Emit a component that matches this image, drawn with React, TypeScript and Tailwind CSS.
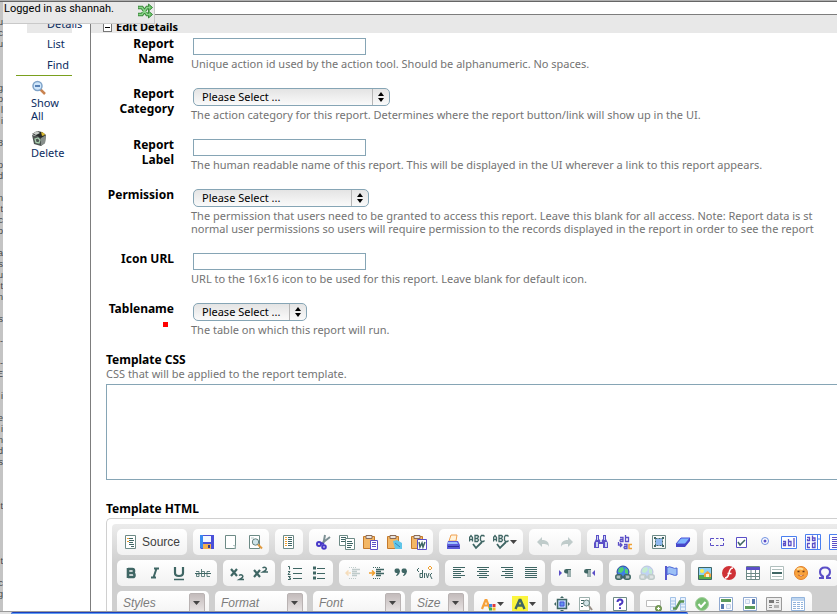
import type { ReactNode } from 'react';

const T = '#3f6664';
const B = '#5b4fc7';

/* ---------- icons ---------- */

function Svg({ children, faded = false }: { children: ReactNode; faded?: boolean }) {
  return (
    <svg
      viewBox="0 0 16 16"
      width="16"
      height="16"
      fill="none"
      aria-hidden="true"
      className={faded ? 'shrink-0 opacity-30' : 'shrink-0'}
    >
      {children}
    </svg>
  );
}

const Page = ({ children }: { children?: ReactNode }) => (
  <>
    <path d="M2.5 1.5h10v13h-10z" fill="#fff" stroke="#6d8a86" />
    {children}
  </>
);

const SourceIcon = () => (
  <Svg>
    <Page />
    <path d="M4 4.500h2M4 7.500h2" stroke="#f0a030" />
    <path d="M6 4.500h4M6 6.500h5M6 8.500h4M6 10.500h5M8 12.500h3" stroke={T} />
  </Svg>
);
const SaveIcon = () => (
  <Svg>
    <path d="M1 1h14v14H2l-1-1z" fill="#4a50d8" />
    <path d="M1 1h3v13H2l-1-1z" fill="#3a8af0" />
    <path d="M4 2h8v6H4z" fill="#f4f8ff" />
    <path d="M4 10h8v5H4z" fill="#f0b050" />
    <path d="M9 11h2v3H9z" fill="#3b3b88" />
  </Svg>
);
const NewIcon = () => (
  <Svg>
    <Page />
    <path d="M10 11.500h2v3" stroke="#b5c8c5" />
  </Svg>
);
const PreviewIcon = () => (
  <Svg>
    <Page />
    <circle cx="8.500" cy="8" r="3.200" fill="#cfe4ea" stroke="#64807d" />
    <path d="M11 10.500l4 4" stroke="#e09a40" strokeWidth="2" />
    <path d="M4 4h3" stroke="#b5c8c5" />
  </Svg>
);
const TemplatesIcon = () => (
  <Svg>
    <Page />
    <path d="M5 3v10" stroke="#f0a030" strokeWidth="2" strokeDasharray="1 1" />
    <path d="M7 3.500h4M7 5.500h4M7 7.500h4M7 9.500h4M7 11.500h4" stroke={T} />
  </Svg>
);
const CutIcon = () => (
  <Svg>
    <path d="M10 1L8.500 9M15 3L6 10" stroke="#7d9094" strokeWidth="2" />
    <circle cx="4" cy="10" r="2" stroke="#4738c8" strokeWidth="2" />
    <circle cx="9" cy="13" r="1.800" stroke="#4738c8" strokeWidth="2" />
    <path d="M5 9l4 1" stroke="#4738c8" strokeWidth="2" />
  </Svg>
);
const CopyIcon = () => (
  <Svg>
    <path d="M.5 1.500h8v10h-8z" fill="#fff" stroke="#6d8a86" />
    <path d="M2 3.500h5M2 5.500h5M2 7.500h4" stroke={T} />
    <path d="M6.500 4.500h9v11h-9z" fill="#fff" stroke="#6d8a86" />
    <path d="M8 7.500h5M8 9.500h6M8 11.500h5M8 13.500h4" stroke={T} />
  </Svg>
);
const Clip = () => (
  <>
    <path d="M.5 2.500h11v12H.5z" fill="#f3b765" stroke="#c47a2c" />
    <path d="M3 1.500h6v3H3z" fill="#e9e4e0" stroke="#8a6a55" />
  </>
);
const PasteIcon = () => (
  <Svg>
    <Clip />
    <path d="M7.500 6.500h7v9h-7z" fill="#fff" stroke={B} />
    <path d="M9 8.500h4M9 10.500h4M9 12.500h4" stroke={B} />
  </Svg>
);
const PasteTextIcon = () => (
  <Svg>
    <Clip />
    <path d="M6 7l4-1 5 3v6H8z" fill="#5fc5e8" />
    <path d="M8 9l5 4" stroke="#2f88c0" />
  </Svg>
);
const PasteWordIcon = () => (
  <Svg>
    <Clip />
    <path d="M6.500 5.500h9v10h-9z" fill="#fff" stroke={B} />
    <path d="M8 8l1 5 2-4 1 4 2-5" stroke={T} strokeWidth="1.500" />
  </Svg>
);
const PrintIcon = () => (
  <Svg>
    <path d="M6 1h6l-1 6H4z" fill="#fff3dc" stroke="#f0a050" />
    <path d="M3 7h10l2 4v4H2v-4z" fill="#5a5ad8" />
    <path d="M3 8h9l1 2H3z" fill="#9fc0ff" />
    <path d="M3 12.500h11" stroke="#2c2f9a" />
  </Svg>
);
const SpellIcon = () => (
  <Svg>
    <path
      d="M.5 7.500v-4l1.500-2 1.500 2v4M.5 5.500h3M6 7.500v-6h2.500l1 1-1 2 1 1.500-1 1.500zM6 4.500h3M15.500 2.500l-1-1h-2l-1 1.500v3l1 1.500h2l1-1"
      stroke={T}
      strokeWidth="1.300"
    />
    <path d="M4 10l3 4 6-6" stroke={T} strokeWidth="1.800" />
  </Svg>
);
const UndoIcon = () => (
  <Svg faded>
    <path d="M2 8l5-5v3c5 0 7 2 7 7-1-3-3-3-7-3v3z" fill={T} />
  </Svg>
);
const RedoIcon = () => (
  <Svg faded>
    <path d="M14 8L9 3v3c-5 0-7 2-7 7 1-3 3-3 7-3v3z" fill={T} />
  </Svg>
);
const FindIcon = () => (
  <Svg>
    <path d="M3 1h3v4l1 1h2l1-1V1h3v4l2 4v5h-5v-4H6v4H1V9l2-4z" fill={B} />
    <path d="M3 8h2v5H3zM12 8h2v5h-2zM7 6h2v2H7zM4 2h1v4H4zM11 2h1v4h-1z" fill="#c9d4f2" />
  </Svg>
);
const ReplaceIcon = () => (
  <Svg>
    <path d="M3 3.500h3v4H3.500L3 6.500 3.500 5.500H6M8.500 1v6.500h3v-4h-3" stroke={B} strokeWidth="1.300" />
    <path d="M1.500 8v3h3M3 9l2 2-2 2M7 10.500h3v4H7.500L7 13.500l.5-1H10" stroke={B} strokeWidth="1.300" />
    <path d="M15 10.500h-3v4h3" stroke="#f0a030" strokeWidth="1.500" />
  </Svg>
);
const SelectAllIcon = () => (
  <Svg>
    <path d="M1.500 1.500h13v13h-13z" stroke="#6d8a86" />
    <path d="M4.500 4.500h7v7h-7z" fill="#8fb8f0" stroke={T} strokeDasharray="2 1" />
    <path d="M3 4h2M11 4h2M3 12h2M11 12h2" stroke={T} strokeWidth="2" />
  </Svg>
);
const EraserIcon = () => (
  <Svg>
    <path d="M6 4h9l-5 6H1z" fill="#7fb6ff" stroke="#4a50d8" />
    <path d="M1 10h9v3H1zM10 10l5-6v3l-5 6z" fill="#4646c8" />
  </Svg>
);
const FormIcon = () => (
  <Svg>
    <path d="M1.500 7V4.500H5M1.500 9v2.500H5M7 4.500h2.500M7 11.500h2.500M11 4.500h3.500V7M11 11.500h3.500V9" stroke={B} />
  </Svg>
);
const CheckIcon = () => (
  <Svg>
    <path d="M3.500 3.500h10v10h-10z" fill="#fff" stroke={B} />
    <path d="M5 8l2 3 5-5" stroke={T} strokeWidth="1.500" />
  </Svg>
);
const RadioIcon = () => (
  <Svg>
    <circle cx="8" cy="7" r="3.500" fill="#fff" stroke="#6f8fe0" />
    <circle cx="8" cy="7" r="1.500" fill={B} />
  </Svg>
);
const TextFieldIcon = () => (
  <Svg>
    <path d="M.5 2.500h15v12H.5z" fill="#fff" stroke="#4a7ff0" />
    <path d="M2 7.500h2.500v4H2.500v-2h2M7.500 5v6.500h2.500v-4H7.500M13 4v9" stroke={B} strokeWidth="1.300" />
  </Svg>
);
const TextAreaIcon = () => (
  <Svg>
    <path d="M.5.5h15v15H.5z" fill="#fff" stroke="#4a7ff0" />
    <path d="M12.500 1v14M12.500 5h3" stroke="#4a7ff0" />
    <path d="M2 3.500h2.500v3H2.500V5M7.500 1.500v5H10V4H7.500M5 9.500H2.500v4H5M10 8v5.500H7.500v-4H10" stroke={B} strokeWidth="1.300" />
  </Svg>
);
const ListBoxIcon = () => (
  <Svg>
    <path d="M.5.5h15v15H.5z" fill="#fff" stroke="#4a7ff0" />
    <path d="M3 3.500h8M3 5.500h8M3 7.500h8M3 9.500h8M3 11.500h8M3 13.500h8" stroke={B} />
  </Svg>
);
const BoldIcon = () => (
  <Svg>
    <path d="M5 3v10M5 4h4.500q1.500 0 1.500 2t-1.500 2H5M9.500 8q2 0 2 2.200T9.500 12H5" stroke={T} strokeWidth="2.600" />
  </Svg>
);
const ItalicIcon = () => (
  <Svg>
    <path d="M7 3.500h5M4 12.500h5M9.500 3.500l-3 9" stroke={T} strokeWidth="2" />
  </Svg>
);
const UnderlineIcon = () => (
  <Svg>
    <path d="M4 2v6q0 3 4 3t4-3V2" stroke={T} strokeWidth="2.200" />
    <path d="M3 14.500h10" stroke={T} strokeWidth="1.500" />
  </Svg>
);
const StrikeIcon = () => (
  <Svg>
    <path
      d="M1 6.500h3v5H1.500V9H4M6.500 4v7.500h3v-5h-3M15 6.500h-3v5h3"
      stroke={T}
      strokeOpacity=".8"
    />
    <path d="M0 8.500h16" stroke={T} />
  </Svg>
);
const SubIcon = () => (
  <Svg>
    <path d="M2 4l6 7M8 4l-6 7" stroke={T} strokeWidth="2.200" />
    <path d="M10 10.500q2-1.500 3.500 0T10.500 14.500H15" stroke={T} strokeWidth="1.500" />
  </Svg>
);
const SupIcon = () => (
  <Svg>
    <path d="M1 5l6 7M7 5l-6 7" stroke={T} strokeWidth="2.200" />
    <path d="M9.500 3q2-1.500 3.500 0T10 7H15" stroke={T} strokeWidth="1.500" />
  </Svg>
);
const NumListIcon = () => (
  <Svg>
    <path d="M1 1.500h1.500v3M1 6.500h2L1 9.500h2.500M1 11.500h2.500L2 13h1.500v1.500H1" stroke={T} />
    <path d="M6 3.500h9M6 8.500h9M6 13.500h9" stroke={T} />
  </Svg>
);
const BulletListIcon = () => (
  <Svg>
    <path d="M2 3h3M2 8h3M2 13h3" stroke={T} strokeWidth="3" />
    <path d="M6 3.500h8M6 8.500h8M6 13.500h8" stroke={T} />
  </Svg>
);
const IndentBase = ({ left }: { left: boolean }) => (
  <>
    <path d="M7 4.500h8M7 6.500h5M7 8.500h8M7 10.500h5" stroke={T} strokeWidth="1.300" />
    <path d="M4 2.500h8M4 13.500h8" stroke={T} strokeDasharray="1 1" />
    <path
      d={left ? 'M6 8H1M3.500 5.500L1 8l2.500 2.500' : 'M0 8h5M3 5.500L5.500 8 3 10.500'}
      stroke="#f0a030"
      strokeWidth="1.500"
    />
  </>
);
const OutdentIcon = () => (
  <Svg faded>
    <IndentBase left />
  </Svg>
);
const IndentIcon = () => (
  <Svg>
    <IndentBase left={false} />
  </Svg>
);
const QuoteIcon = () => (
  <Svg>
    <path d="M3 3.500h2.500q1.500 1 1.500 3T4 11H3l1.500-3H3q-1.500-.5-1.500-2.200T3 3.500zM10 3.500h2.500q1.500 1 1.500 3T11 11h-1l1.500-3H10q-1.500-.5-1.500-2.200T10 3.500z" fill={T} />
  </Svg>
);
const DivIcon = () => (
  <Svg>
    <path d="M2 3L0 5l2 2M3 8.500v4h2.500V5M5 8.500H3M7.500 8v5M9 8l1.500 5L12 8M15 8l-2 2 2 4" stroke={T} />
    <path d="M13 1l2 2-2 2-2-2z" stroke="#f0a030" />
  </Svg>
);
function AlignIcon({ mode }: { mode: 'left' | 'center' | 'right' | 'justify' }) {
  const d = {
    left: 'M2 2.500h12M2 4.500h8M2 6.500h11M2 8.500h8M2 10.500h12M2 12.500h8',
    center: 'M2 2.500h12M4 4.500h8M2 6.500h12M4 8.500h8M2 10.500h12M4 12.500h8',
    right: 'M2 2.500h12M6 4.500h8M3 6.500h11M6 8.500h8M2 10.500h12M6 12.500h8',
    justify: 'M2 2.500h12M2 4.500h12M2 6.500h12M2 8.500h12M2 10.500h12M2 12.500h12',
  }[mode];
  return (
    <Svg>
      <path d={d} stroke={T} />
    </Svg>
  );
}
const Pilcrow = ({ x }: { x: number }) => (
  <path
    d={`M${x + 7} 4H${x + 2.5}q-2.500 0-2.500 2.200t2.500 2.300h1V12h1V5h1v7h1V5h.5z`}
    fill={T}
  />
);
const LtrIcon = () => (
  <Svg>
    <path d="M2 5l3 3-3 3z" fill={B} />
    <Pilcrow x={7} />
  </Svg>
);
const RtlIcon = () => (
  <Svg>
    <path d="M14 5l-3 3 3 3z" fill={B} />
    <Pilcrow x={3} />
  </Svg>
);
const LinkIcon = ({ faded = false }: { faded?: boolean }) => (
  <Svg faded={faded}>
    <circle cx="8" cy="7" r="6" fill="#3f7fe8" stroke="#2c4a9a" />
    <path d="M4 3l4-1 1 3-3 3-3-1zM10 3l3 2v4l-3-1z" fill="#4fd070" />
    <rect x=".8" y="9.800" width="6" height="4.500" rx="2" fill="#aebebc" stroke={T} strokeWidth="1.500" />
    <rect x="9.200" y="9.800" width="6" height="4.500" rx="2" fill="#aebebc" stroke={T} strokeWidth="1.500" />
    <path d="M5 12h6" stroke={T} strokeWidth="1.500" />
  </Svg>
);
const FlagIcon = () => (
  <Svg>
    <path d="M3 1v14" stroke="#4646c8" strokeWidth="1.800" />
    <path d="M4 2.500q2.500-1.500 5 0t5 .5v7q-2.500 1-5-.5t-5 0z" fill="#9cc0f6" stroke="#4a66d8" />
  </Svg>
);
const ImageIcon = () => (
  <Svg>
    <path d="M1.500 2.500h13v12h-13z" fill="#8fd0f6" stroke={T} />
    <path d="M2 10h12v4H2z" fill="#58ad4a" />
    <circle cx="5" cy="6" r="2" fill="#fdf04a" />
    <path d="M7 9l3.500-3L14 9v3H7z" fill="#f6a13a" />
    <path d="M9 9h3v3H9z" fill="#fff1c8" />
  </Svg>
);
const FlashIcon = () => (
  <Svg>
    <circle cx="8" cy="8" r="7" fill="#cf3236" />
    <path d="M12 3q-3 0-4 5t-4 5M6.500 8.500h4" stroke="#fff" strokeWidth="1.500" />
  </Svg>
);
const TableIcon = () => (
  <Svg>
    <path d="M1.500 1.500h13v13h-13zM1.500 8.500h13M1.500 11.500h13M6 5v9M10.500 5v9" fill="#fff" stroke="#6d8a86" />
    <path d="M1 2h14v3H1z" fill={B} />
  </Svg>
);
const HrIcon = () => (
  <Svg>
    <path d="M1.500 1.500h13v13h-13z" fill="#fff" stroke="#b0bfbd" />
    <path d="M3 4.500h10M3 11.500h10" stroke="#b0bfbd" />
    <path d="M3 8h10" stroke={T} strokeWidth="2" />
  </Svg>
);
const SmileyIcon = () => (
  <Svg>
    <circle cx="8" cy="8" r="6.500" fill="#f9a23c" stroke="#e0812c" />
    <path d="M4 4.500q3-2 6 0" stroke="#ffdf9a" strokeWidth="2" />
    <path d="M4.500 6.500h2M9.500 6.500h2" stroke="#6b3a18" strokeWidth="1.500" />
    <path d="M5 10q3 2.500 6 0" fill="#fff" stroke="#c0602c" />
  </Svg>
);
const OmegaIcon = () => (
  <Svg>
    <path d="M2 13h4v-1.500Q3 10 3 7q0-4.500 5-4.500T13 7q0 3-3 4.500V13h4" stroke={B} strokeWidth="2" />
  </Svg>
);
const TextColorIcon = () => (
  <Svg>
    <path d="M2 13L5.500 4h1L10 13M3.500 9.500h5" stroke="#f6a13a" strokeWidth="2.200" />
    <path d="M9 8h3v3H9z" fill="#3b86e8" />
    <path d="M12.500 8h3v3h-3z" fill="#e03a3a" />
    <path d="M9 11.500h3v3H9z" fill="#40b050" />
    <path d="M12.500 11.500h3v3h-3z" fill="#f0c030" />
  </Svg>
);
const HiliteIcon = () => (
  <Svg>
    <path d="M0 0h16v16H0z" fill="#fbf53e" />
    <path d="M3.500 13L7.500 4h1l4 9M5 9.500h6" stroke={T} strokeWidth="2.400" />
  </Svg>
);
const MaximizeIcon = () => (
  <Svg>
    <path d="M3.500 3.500h9v9h-9z" fill="#b8d4fb" stroke={T} strokeWidth="1.500" />
    <path d="M6 6h4v4H6z" fill="#5f95ee" stroke="#4a50d8" />
    <path d="M8 0l2 2H6zM8 16l2-2H6zM0 8l2-2v4zM16 8l-2-2v4z" fill={T} />
  </Svg>
);
const BlocksIcon = () => (
  <Svg>
    <path d="M1.500 1.500h10v13h-10z" fill="#fff" stroke="#9db0ad" />
    <path d="M3 4.500h3M3 7.500h2M3 10.500h2" stroke={T} />
    <circle cx="8.500" cy="7" r="3" fill="#d5e6ea" stroke="#64807d" />
    <path d="M11 10l3 4" stroke="#9a9088" strokeWidth="2" />
  </Svg>
);
const AboutIcon = () => (
  <Svg>
    <path d="M1.500 1.500h13v13h-13z" fill="#fff" stroke="#6d8a86" />
    <path d="M5.500 6q0-2.500 2.500-2.500T10.500 6Q10.500 7.500 8 8.500v1.200M8 11.200v1.800" stroke="#4a38c0" strokeWidth="2" />
  </Svg>
);
const FieldAddIcon = () => (
  <Svg>
    <path d="M.5 4.500h14v6H.5z" fill="#fff" stroke="#bcbcbc" />
    <circle cx="12.500" cy="12.500" r="3" fill="#84a862" stroke="#5e8440" />
    <path d="M11 12.500h3M12.500 11v3" stroke="#fff" />
  </Svg>
);
const MergeIcon = () => (
  <Svg>
    <path d="M.5 1.500h5v13h-5zM10.500 1.500h5v13h-5zM.5 5h5M.5 8h5M.5 11h5M10.500 5h5M10.500 8h5M10.500 11h5" fill="#e9f2fd" stroke="#a3c2e6" />
    <path d="M3 12.500h3l4-7h4" stroke="#5b9455" strokeWidth="2.500" />
  </Svg>
);
const AcceptIcon = () => (
  <Svg>
    <circle cx="8" cy="8" r="6.500" fill="#78bd72" stroke="#a3cf9e" />
    <path d="M4.500 8l2.500 3 4.500-5" stroke="#fff" strokeWidth="2" />
  </Svg>
);
const HeaderLayoutIcon = () => (
  <Svg>
    <path d="M1.500 1.500h13v13h-13z" fill="#fff" stroke="#8fa9d0" />
    <path d="M3 3h10v3H3z" fill="#5c9c5c" />
    <path d="M3 8h3v5H3z" fill="#5577ad" />
    <path d="M8.500 8.500h4v4h-4z" fill="#eef3fa" stroke="#c5d3e8" />
  </Svg>
);
const FooterLayoutIcon = () => (
  <Svg>
    <path d="M1.500 1.500h13v13h-13z" fill="#fff" stroke="#8fa9d0" />
    <path d="M3 10h10v3H3z" fill="#5c9c5c" />
    <path d="M10 3h3v5h-3z" fill="#5577ad" />
    <path d="M3.500 3.500h4v4h-4z" fill="#eef3fa" stroke="#c5d3e8" />
  </Svg>
);
const NewsIcon = () => (
  <Svg>
    <path d="M.5 1.500h15v13H.5z" fill="#ededed" stroke="#9a9a9a" />
    <path d="M3 4h5v3H3z" fill="#777" />
    <path d="M10 4.500h3M10 6.500h3M3 9.500h3M3 11.500h3" stroke="#8c8c8c" />
    <path d="M8 9h5v3H8z" fill="#b5b5b5" />
  </Svg>
);
const GridIcon = () => (
  <Svg>
    <path d="M1.500 1.500h13v13h-13z" fill="#fff" stroke="#93b4dc" />
    <path d="M2 2h12v3H2z" fill="#bfd6f0" />
    <path d="M3 6.500h10M3 8.500h10M3 10.500h10M3 12.500h10" stroke="#93b4dc" strokeDasharray="3 1" />
  </Svg>
);
const ShuffleIcon = () => (
  <Svg>
    <path d="M1 4.500h4l5 7h3M1 11.500h4l5-7h3" stroke="#3b8a3b" strokeWidth="3.400" />
    <path d="M11.500 1l4 3.500-4 3.500zM11.500 8l4 3.500-4 3.500z" fill="#6cc46c" stroke="#3b8a3b" />
    <path d="M1.500 4.500H5l5 7h3M1.500 11.500H5l5-7h3" stroke="#8ad48a" strokeWidth="1.400" />
  </Svg>
);
const ZoomOutIcon = () => (
  <Svg>
    <path d="M9 9l5 5" stroke="#c98350" strokeWidth="2.500" />
    <circle cx="6.500" cy="6" r="4.500" fill="#cfe6fb" stroke="#7fa3c8" strokeWidth="1.500" />
    <path d="M4 6h5" stroke="#2f5f9f" strokeWidth="1.500" />
  </Svg>
);
const TrashIcon = () => (
  <Svg>
    <path d="M1 5l9 2 5-2-1 8-4 3-7-2z" fill="#4e5452" />
    <path d="M10 7l5-2-1 8-4 3z" fill="#888f8c" />
    <path d="M1 4l5-3 5 1 4 3-5 3z" fill="#262a29" />
    <path d="M2 3.500l4-2.500 3 2-4 2z" fill="#c9cdc8" />
    <path d="M10 2l3 1 1 2-3 1z" fill="#d8b830" />
    <path d="M4 9l3-1 2 2-1 3-3-.5z" stroke="#a8cfae" strokeWidth="1.300" />
  </Svg>
);
const Caret = () => (
  <svg viewBox="0 0 8 4" width="8" height="4" aria-hidden="true" className="shrink-0">
    <path d="M0 0h7L3.500 4z" fill="#454545" />
  </svg>
);

/* ---------- toolbar parts ---------- */

function Group({ children }: { children: ReactNode }) {
  return (
    <div className="flex h-[26px] shrink-0 items-center rounded-[5px] bg-gradient-to-b from-white to-[#f2f2f2] px-0.5">
      {children}
    </div>
  );
}

function Tool({ name, children }: { name: string; children: ReactNode }) {
  return (
    <button type="button" aria-label={name} className="flex h-6 w-6 shrink-0 items-center justify-center">
      {children}
    </button>
  );
}

function MenuTool({ name, children }: { name: string; children: ReactNode }) {
  return (
    <button type="button" aria-label={name} className="flex h-6 w-8 shrink-0 items-center gap-px pl-1">
      {children}
      <Caret />
    </button>
  );
}

function Combo({ label, width }: { label: string; width: string }) {
  return (
    <div className={`relative h-[26px] shrink-0 rounded-[5px] bg-gradient-to-b from-white to-[#f2f2f2] ${width}`}>
      <select
        aria-label={label}
        className="block h-6 w-full appearance-none bg-transparent pl-1.5 font-['Liberation_Sans',Arial,sans-serif] text-xs text-[#7c7c7c] italic"
      >
        <option>{label}</option>
      </select>
      <span className="pointer-events-none absolute top-0.5 right-1 flex h-5 w-4 items-center justify-center rounded-[2px] border border-[#b9b3b3] bg-gradient-to-b from-[#c3bbbb] to-[#e9e5e5]">
        <Caret />
      </span>
    </div>
  );
}

/* ---------- form parts ---------- */

function Field({
  id,
  label,
  help,
  required = false,
  children,
}: {
  id: string;
  label: string;
  help: ReactNode;
  required?: boolean;
  children: ReactNode;
}) {
  return (
    <div className="flex pb-4">
      <div className="w-[83px] shrink-0 text-right">
        <label htmlFor={id} className="block pl-[10px] text-xs leading-[15px] font-bold text-black">
          {label}
        </label>
        {required && <span className="mt-1.5 mr-1.5 ml-auto block size-[5px] bg-[#f00]" />}
      </div>
      <div className="min-w-0 flex-1 pt-0.5 pl-[17px]">
        <div className="flex pl-0.5">{children}</div>
        <p className="mt-0.5 text-[11px] leading-[13px] whitespace-nowrap text-[#737373]">{help}</p>
      </div>
    </div>
  );
}

function TextInput({ id }: { id: string }) {
  return <input id={id} type="text" className="h-[17px] w-[173px] border border-[#86a5b5] bg-white px-1 text-[11px]" />;
}

function Picker({ id, width }: { id: string; width: string }) {
  return (
    <div className={`relative h-[18px] ${width}`}>
      <select
        id={id}
        className="block h-full w-full appearance-none rounded-[5px] border border-[#86a5b5] bg-gradient-to-b from-[#e4e4e4] to-[#fafafa] pl-2 text-[11px] leading-4 text-black"
      >
        <option>Please Select ...</option>
      </select>
      <span className="pointer-events-none absolute inset-y-px right-px flex w-[17px] items-center justify-center border-l border-[#b5b5b5]">
        <svg viewBox="0 0 6 10" width="6" height="10" aria-hidden="true">
          <path d="M3 0l3 4H0zM3 10l3-4H0z" fill="#000" />
        </svg>
      </span>
    </div>
  );
}

const behind = [
  '', 'u', 'c', 'u', '', '', '', 'g', 'o', 'l', 'i', '', '8', '', 'o', 'd', '', 'n', 't', 'c', 'o', '', 'a', 's', 'u',
  't', 'n', '', 's', '', '-', '', '-', 'E', '', 'i', '', 'e', 'i', 'n', 'd', 's', '', '', '', 't', '', '', '', '', 't',
  '', 'c', 'g',
];

export default function App() {
  return (
    <div className="relative flex h-screen flex-col overflow-hidden bg-white font-['Noto_Sans',sans-serif]">
      <div className="h-0.5 shrink-0 border-b border-[#666] bg-[#b0b0b0]" />

      <div className="absolute top-0.5 left-[3px] z-10 flex h-[22px] w-[152px] items-start justify-between border-r border-b border-[#c9c9c9] bg-[#e9e9e9] pr-px pl-px font-[Roboto,sans-serif] text-[11px] leading-[14px] text-black">
        <span className="whitespace-nowrap">Logged in as shannah.</span>
        <button type="button" aria-label="Switch user" className="pt-px">
          <ShuffleIcon />
        </button>
      </div>

      <div className="flex min-h-0 flex-1">
        <div
          aria-hidden="true"
          className="flex w-[3px] shrink-0 flex-col items-end overflow-hidden bg-[#c4c4c4] pt-1 font-['Liberation_Sans',Arial,sans-serif] text-[9px] leading-[11px] text-[#444]"
        >
          {behind.map((c, i) => (
            <span key={i} className="h-[11px] shrink-0">
              {c}
            </span>
          ))}
        </div>

        <nav className="w-[88px] shrink-0 border-r border-[#7d7d7d] pt-3 text-[11px] text-[#0b2c5f]">
          <div className="mr-[18px] ml-[13px] border-b border-[#7aa01e]">
            <a href="#details" className="ml-[11px] block h-[19px] bg-[#e8e8e8] pl-5 leading-[19px]">
              Details
            </a>
            <a href="#list" className="block pl-[31px] leading-[21px]">
              List
            </a>
            <a href="#find" className="block pl-[31px] leading-[21px]">
              Find
            </a>
          </div>
          <a href="#all" className="mt-1 ml-7 block w-8 leading-[13px]">
            <span className="block">
              <ZoomOutIcon />
            </span>
            Show All
          </a>
          <a href="#delete" className="mt-2 ml-7 block leading-[13px]">
            <span className="block">
              <TrashIcon />
            </span>
            Delete
          </a>
        </nav>

        <main className="min-w-0 flex-1 overflow-hidden pt-3">
          <h2 className="flex h-[19px] items-center gap-1 border-t border-[#7d7d7d] bg-[#e8e8e8] pt-1.5 pl-3 text-[11px] font-bold text-black">
            <button
              type="button"
              aria-label="Collapse section"
              className="flex size-[9px] items-center justify-center border border-[#777] bg-white"
            >
              <span className="h-px w-[5px] bg-black" />
            </button>
            Edit Details
          </h2>

          <form className="pt-[3px]">
            <Field
              id="name"
              label="Report Name"
              help="Unique action id used by the action tool. Should be alphanumeric. No spaces."
            >
              <TextInput id="name" />
            </Field>
            <Field
              id="category"
              label="Report Category"
              help="The action category for this report. Determines where the report button/link will show up in the UI."
            >
              <Picker id="category" width="w-[197px]" />
            </Field>
            <Field
              id="label"
              label="Report Label"
              help="The human readable name of this report. This will be displayed in the UI wherever a link to this report appears."
            >
              <TextInput id="label" />
            </Field>
            <Field
              id="permission"
              label="Permission"
              help={
                <>
                  The permission that users need to be granted to access this report. Leave this blank for all access.
                  Note: Report data is st
                  <br />
                  normal user permissions so users will require permission to the records displayed in the report in
                  order to see the report
                </>
              }
            >
              <Picker id="permission" width="w-[176px]" />
            </Field>
            <Field
              id="icon"
              label="Icon URL"
              help="URL to the 16x16 icon to be used for this report. Leave blank for default icon."
            >
              <TextInput id="icon" />
            </Field>
            <Field id="table" label="Tablename" required help="The table on which this report will run.">
              <Picker id="table" width="w-[114px]" />
            </Field>

            <div className="pl-[15px]">
              <label htmlFor="css" className="block text-xs leading-[15px] font-bold text-black">
                Template CSS
              </label>
              <p className="text-[11px] leading-[13px] text-[#737373]">
                CSS that will be applied to the report template.
              </p>
              <textarea
                id="css"
                className="mt-1 block h-24 w-full resize-none border border-r-0 border-[#86a5b5] bg-white"
              />

              <h3 className="mt-[21px] text-xs leading-[15px] font-bold text-black">Template HTML</h3>
              <div className="mt-0.5 rounded-tl-[5px] border-t border-l border-[#d0d0d0] pt-[5px] pl-[5px]">
                <div
                  role="toolbar"
                  aria-label="Editor"
                  className="flex h-[100px] flex-col gap-[5px] overflow-hidden rounded-tl-[4px] bg-gradient-to-b from-[#ececec] to-[#cfcfcf] to-40% pt-[5px] pl-[5px]"
                >
                  <div className="flex gap-1.5">
                    <Group>
                      <button
                        type="button"
                        className="flex h-6 w-[66px] items-center gap-[3px] pl-1 font-['Liberation_Sans',Arial,sans-serif] text-xs text-[#404040]"
                      >
                        <SourceIcon />
                        Source
                      </button>
                    </Group>
                    <Group>
                      <Tool name="Save"><SaveIcon /></Tool>
                      <Tool name="New page"><NewIcon /></Tool>
                      <Tool name="Preview"><PreviewIcon /></Tool>
                    </Group>
                    <Group>
                      <Tool name="Templates"><TemplatesIcon /></Tool>
                    </Group>
                    <Group>
                      <Tool name="Cut"><CutIcon /></Tool>
                      <Tool name="Copy"><CopyIcon /></Tool>
                      <Tool name="Paste"><PasteIcon /></Tool>
                      <Tool name="Paste as plain text"><PasteTextIcon /></Tool>
                      <Tool name="Paste from Word"><PasteWordIcon /></Tool>
                    </Group>
                    <Group>
                      <Tool name="Print"><PrintIcon /></Tool>
                      <Tool name="Check spelling"><SpellIcon /></Tool>
                      <MenuTool name="Spell check options"><SpellIcon /></MenuTool>
                    </Group>
                    <Group>
                      <Tool name="Undo"><UndoIcon /></Tool>
                      <Tool name="Redo"><RedoIcon /></Tool>
                    </Group>
                    <Group>
                      <Tool name="Find"><FindIcon /></Tool>
                      <Tool name="Replace"><ReplaceIcon /></Tool>
                    </Group>
                    <Group>
                      <Tool name="Select all"><SelectAllIcon /></Tool>
                      <Tool name="Remove format"><EraserIcon /></Tool>
                    </Group>
                    <Group>
                      <Tool name="Form"><FormIcon /></Tool>
                      <Tool name="Checkbox"><CheckIcon /></Tool>
                      <Tool name="Radio button"><RadioIcon /></Tool>
                      <Tool name="Text field"><TextFieldIcon /></Tool>
                      <Tool name="Text area"><TextAreaIcon /></Tool>
                      <Tool name="Selection field"><ListBoxIcon /></Tool>
                    </Group>
                  </div>

                  <div className="flex gap-1.5">
                    <Group>
                      <Tool name="Bold"><BoldIcon /></Tool>
                      <Tool name="Italic"><ItalicIcon /></Tool>
                      <Tool name="Underline"><UnderlineIcon /></Tool>
                      <Tool name="Strike through"><StrikeIcon /></Tool>
                    </Group>
                    <Group>
                      <Tool name="Subscript"><SubIcon /></Tool>
                      <Tool name="Superscript"><SupIcon /></Tool>
                    </Group>
                    <Group>
                      <Tool name="Numbered list"><NumListIcon /></Tool>
                      <Tool name="Bulleted list"><BulletListIcon /></Tool>
                    </Group>
                    <Group>
                      <Tool name="Decrease indent"><OutdentIcon /></Tool>
                      <Tool name="Increase indent"><IndentIcon /></Tool>
                      <Tool name="Block quote"><QuoteIcon /></Tool>
                      <Tool name="Div container"><DivIcon /></Tool>
                    </Group>
                    <Group>
                      <Tool name="Align left"><AlignIcon mode="left" /></Tool>
                      <Tool name="Center"><AlignIcon mode="center" /></Tool>
                      <Tool name="Align right"><AlignIcon mode="right" /></Tool>
                      <Tool name="Justify"><AlignIcon mode="justify" /></Tool>
                    </Group>
                    <Group>
                      <Tool name="Left to right"><LtrIcon /></Tool>
                      <Tool name="Right to left"><RtlIcon /></Tool>
                    </Group>
                    <Group>
                      <Tool name="Link"><LinkIcon /></Tool>
                      <Tool name="Unlink"><LinkIcon faded /></Tool>
                      <Tool name="Anchor"><FlagIcon /></Tool>
                    </Group>
                    <Group>
                      <Tool name="Image"><ImageIcon /></Tool>
                      <Tool name="Flash"><FlashIcon /></Tool>
                      <Tool name="Table"><TableIcon /></Tool>
                      <Tool name="Horizontal line"><HrIcon /></Tool>
                      <Tool name="Smiley"><SmileyIcon /></Tool>
                      <Tool name="Special character"><OmegaIcon /></Tool>
                    </Group>
                  </div>

                  <div className="flex gap-1.5">
                    <Combo label="Styles" width="w-[92px]" />
                    <Combo label="Format" width="w-[92px]" />
                    <Combo label="Font" width="w-[92px]" />
                    <Combo label="Size" width="w-[57px]" />
                    <Group>
                      <MenuTool name="Text color"><TextColorIcon /></MenuTool>
                      <MenuTool name="Background color"><HiliteIcon /></MenuTool>
                    </Group>
                    <Group>
                      <Tool name="Maximize"><MaximizeIcon /></Tool>
                      <Tool name="Show blocks"><BlocksIcon /></Tool>
                    </Group>
                    <Group>
                      <Tool name="About"><AboutIcon /></Tool>
                    </Group>
                    <Group>
                      <Tool name="Insert field"><FieldAddIcon /></Tool>
                      <Tool name="Insert relationship"><MergeIcon /></Tool>
                      <Tool name="Validate"><AcceptIcon /></Tool>
                      <Tool name="Header"><HeaderLayoutIcon /></Tool>
                      <Tool name="Footer"><FooterLayoutIcon /></Tool>
                      <Tool name="Summary"><NewsIcon /></Tool>
                      <Tool name="Grid"><GridIcon /></Tool>
                    </Group>
                  </div>
                </div>
              </div>
            </div>
          </form>
        </main>
      </div>

      <div className="flex h-[3px] shrink-0 border-t border-[#9a9a9a] bg-[#e2e2e2] pl-[11px]">
        <div className="w-[82%] rounded-t-[2px] border-t border-[#1a3fc0] bg-[#5f9cf0]" />
      </div>
    </div>
  );
}
